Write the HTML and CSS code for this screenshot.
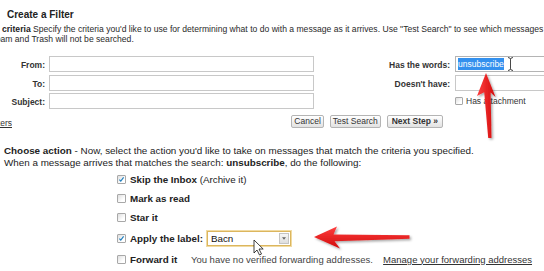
FILE: index.html
```html
<!DOCTYPE html>
<html lang="en">
<head>
    <meta charset="UTF-8">
    <meta name="viewport" content="width=device-width, initial-scale=1.0">
    <title>Create a Filter</title>
    <link rel="stylesheet" href="styles.css">
</head>
<body>
<div class="page">
    <h1 class="title">Create a Filter</h1>

    <div class="desc">
        <div class="desc-line"><b>criteria</b> Specify the criteria you'd like to use for determining what to do with a message as it arrives. Use "Test Search" to see which messages would have been filtered using these criteria.</div>
        <div class="desc-line cut">Spam and Trash will not be searched.</div>
    </div>

    <div class="criteria">
        <label class="lbl">From:</label>
        <input class="field" type="text">
        <label class="lbl r">Has the words:</label>
        <div class="field focused"><span class="sel">unsubscribe</span></div>

        <label class="lbl">To:</label>
        <input class="field" type="text">
        <label class="lbl r">Doesn't have:</label>
        <input class="field" type="text">

        <label class="lbl">Subject:</label>
        <input class="field" type="text">
        <span></span>
        <label class="attach"><span class="cb small"></span>Has attachment</label>
    </div>

    <div class="search-row">
        <div class="clip"><a href="#">Show current filters</a></div>
        <div class="buttons">
            <button type="button">Cancel</button>
            <button type="button">Test Search</button>
            <button type="button" class="next">Next Step &raquo;</button>
        </div>
    </div>

    <div class="action">
        <div><b>Choose action</b> - Now, select the action you'd like to take on messages that match the criteria you specified.</div>
        <div>When a message arrives that matches the search: <b>unsubscribe</b>, do the following:</div>
    </div>

    <div class="options">
        <div class="opt">
            <span class="cb checked"><svg viewBox="0 0 9 9"><path d="M1.8 4.6 L3.6 6.6 L7.2 1.9"/></svg></span>
            <span><b>Skip the Inbox</b> (Archive it)</span>
        </div>
        <div class="opt">
            <span class="cb"></span>
            <b>Mark as read</b>
        </div>
        <div class="opt">
            <span class="cb"></span>
            <b>Star it</b>
        </div>
        <div class="opt tall">
            <span class="cb checked"><svg viewBox="0 0 9 9"><path d="M1.8 4.6 L3.6 6.6 L7.2 1.9"/></svg></span>
            <b>Apply the label:</b>
            <div class="select">
                <span class="select-text">Bacn</span>
                <span class="drop"><svg viewBox="0 0 5 3"><path d="M0 0 H5 L2.5 3 Z"/></svg></span>
            </div>
        </div>
        <div class="opt">
            <span class="cb"></span>
            <b>Forward it</b>
            <span class="note">You have no verified forwarding addresses.</span>
            <a href="#" class="manage">Manage your forwarding addresses</a>
        </div>
    </div>

    <svg class="overlay" width="544" height="271" viewBox="0 0 544 271">
        <defs>
            <linearGradient id="redv" x1="0" y1="0" x2="1" y2="0">
                <stop offset="0" stop-color="#ff4040"/>
                <stop offset="1" stop-color="#d10a0a"/>
            </linearGradient>
            <linearGradient id="redh" x1="0" y1="0" x2="0" y2="1">
                <stop offset="0" stop-color="#ff4040"/>
                <stop offset="1" stop-color="#d10a0a"/>
            </linearGradient>
            <filter id="shadow" x="-40%" y="-40%" width="180%" height="180%">
                <feDropShadow dx="1.5" dy="1.5" stdDeviation="1" flood-color="#000" flood-opacity="0.35"/>
            </filter>
        </defs>
        <!-- arrow pointing at the search words -->
        <path d="M486 73 L495.5 97 L490.6 92.5 L491.5 138 L488.2 138 L484.2 92.3 L477 96 Z" fill="url(#redv)" filter="url(#shadow)"/>
        <!-- arrow pointing at the label -->
        <path d="M314 237 L337 226.5 L333.5 234.5 L409.5 235.3 L409.5 238.7 L334.5 241.2 L340 248.5 Z" fill="url(#redh)" filter="url(#shadow)"/>
        <!-- text cursor -->
        <path d="M508 57.5 Q510.5 57.5 510.5 59.5 V68.5 Q510.5 70.5 508 70.5 M513 57.5 Q510.5 57.5 510.5 59.5 M510.5 68.5 Q510.5 70.5 513 70.5" fill="none" stroke="#333" stroke-width="0.9"/>
        <!-- mouse pointer -->
        <path d="M254 240 V253 L257 250 L259.5 255 L261.5 254 L259 249 H263.2 Z" fill="#fff" stroke="#111" stroke-width="0.8" stroke-linejoin="round"/>
    </svg>
</div>
</body>
</html>
```

FILE: styles.css
```css
* {
    box-sizing: border-box;
}

body {
    margin: 0;
    background: #fff;
    font-family: "Liberation Sans", Arial, sans-serif;
    color: #222;
}

.page {
    position: relative;
    width: 544px;
    height: 271px;
    overflow: hidden;
}

.title {
    margin: 0;
    padding: 9px 0 0 7px;
    font-size: 10px;
    line-height: 12px;
    font-weight: bold;
    color: #222;
}

.desc {
    margin-top: 3px;
    font-size: 8.6px;
    line-height: 10px;
    white-space: nowrap;
    color: #2a2a2a;
}

.desc-line {
    padding-left: 2px;
}

.desc-line b {
    color: #222;
}

.desc-line.cut {
    padding-left: 0;
    margin-left: -10px;
}

/* search criteria form */
.criteria {
    display: grid;
    grid-template-columns: 49px 265px 141px 120px;
    row-gap: 2.5px;
    margin-top: 12px;
}

.lbl {
    font-size: 8.5px;
    font-weight: bold;
    text-align: right;
    padding: 3px 4px 0 0;
    line-height: 13px;
    color: #333;
}

.lbl.r {
    padding-right: 5px;
}

.field {
    width: 100%;
    height: 16px;
    margin: 0;
    border: 1px solid #c8c8c8;
    padding: 0 2px;
    font: 8.5px "Liberation Sans", Arial, sans-serif;
    background: #fff;
    outline: none;
}

.field.focused {
    display: flex;
    align-items: center;
    border-color: #b4b4b4;
}

.sel {
    background: #3390ee;
    color: #fff;
    line-height: 12px;
}

.attach {
    display: flex;
    align-items: center;
    gap: 3px;
    font-size: 8.5px;
    color: #333;
}

.cb {
    flex: none;
    width: 9px;
    height: 9px;
    border: 1px solid #a8a8a8;
    border-radius: 1px;
    background: linear-gradient(135deg, #dedede, #fff 70%);
}

.cb.small {
    width: 8px;
    height: 8px;
}

.cb svg {
    display: block;
    width: 7px;
    height: 7px;
}

.cb path {
    fill: none;
    stroke: #1f7fbf;
    stroke-width: 1.5;
}

.search-row {
    display: flex;
    align-items: flex-end;
    width: 443px;
    margin-top: 6px;
}

.clip {
    width: 12px;
    overflow: hidden;
    display: flex;
    justify-content: flex-end;
    font-size: 8.5px;
    line-height: 10px;
}

.clip a {
    white-space: nowrap;
    color: #333;
}

.buttons {
    margin-left: auto;
    display: flex;
    gap: 6px;
}

.buttons button {
    height: 13px;
    padding: 0 2px;
    border: 1px solid #b4b4b4;
    border-radius: 2px;
    background: linear-gradient(#fff, #e2e2e2);
    font: 8.5px "Liberation Sans", Arial, sans-serif;
    line-height: 11px;
    color: #333;
}

.buttons .next {
    font-weight: bold;
    padding: 0 4px;
}

/* actions */
.action {
    margin-top: 17px;
    padding-left: 4px;
    font-size: 9.85px;
    line-height: 11.5px;
    white-space: nowrap;
}

.options {
    margin-top: 1.5px;
    padding-left: 117px;
    font-size: 9.8px;
    white-space: nowrap;
}

.opt {
    display: flex;
    align-items: center;
    gap: 4px;
    height: 19px;
}

.opt.tall {
    height: 23px;
}

.select {
    display: flex;
    align-items: center;
    justify-content: space-between;
    width: 84px;
    height: 15px;
    padding: 0 1px 0 3px;
    border: 1px solid #dcb65e;
    box-shadow: 0 0 0 1px #f1dba3;
    background: #fff;
}

.select-text {
    color: #111;
}

.drop {
    width: 10px;
    height: 11px;
    border: 1px solid #c4c4c4;
    background: linear-gradient(#f6f6f6, #dedede);
    display: flex;
    align-items: center;
    justify-content: center;
}

.drop svg {
    width: 4px;
    height: 3px;
    fill: #666;
}

.note {
    margin-left: 9.6px;
    font-size: 9.5px;
    color: #444;
}

.manage {
    margin-left: 6.3px;
    font-size: 9.5px;
    color: #333;
}

.overlay {
    position: absolute;
    left: 0;
    top: 0;
    pointer-events: none;
}
```
